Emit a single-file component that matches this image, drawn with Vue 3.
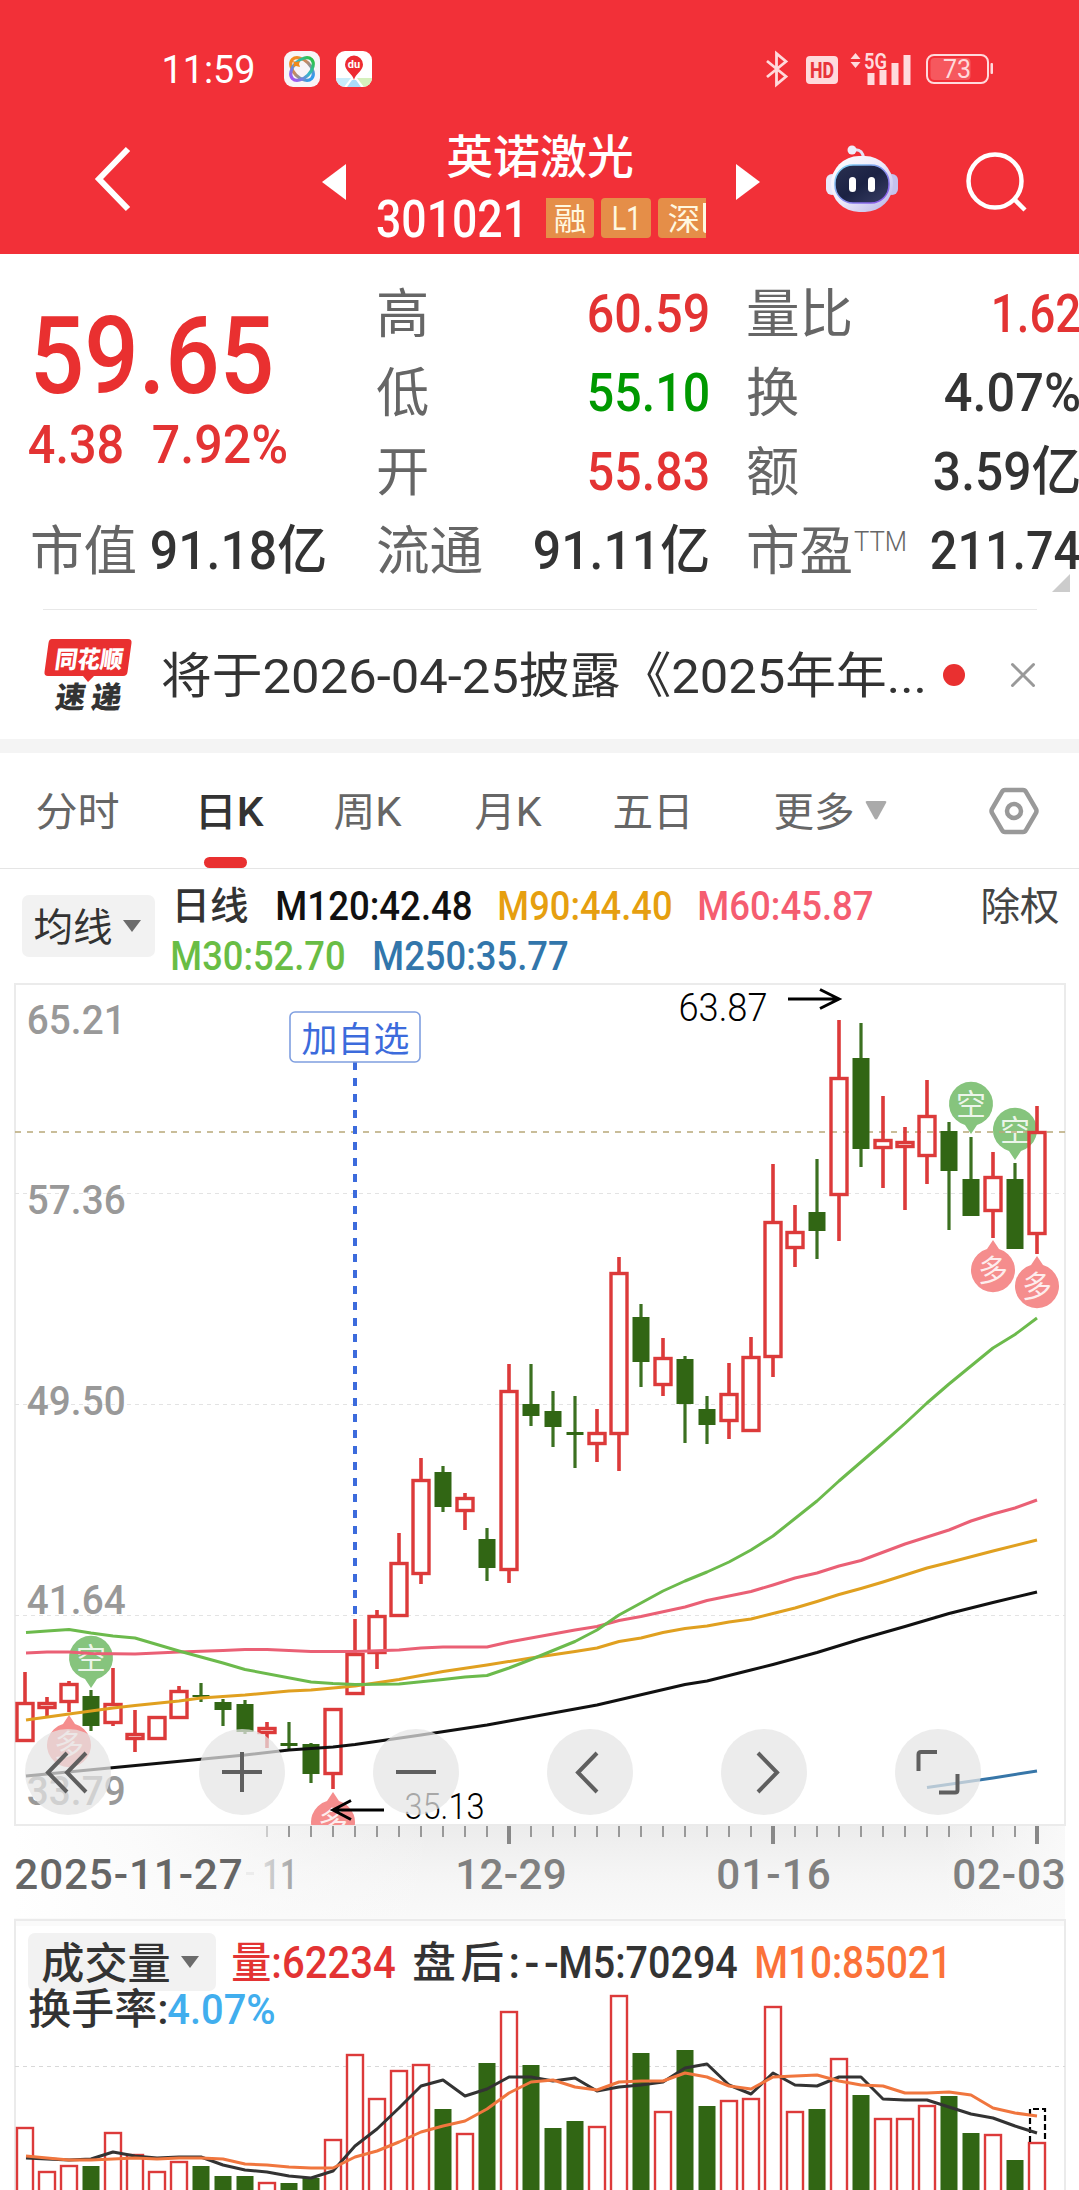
<template>
  <div class="page">
    <header class="top">
      <div class="status">
        <Fit class="time" t="11:59" :w="91" :cap="27" />
        <svg class="app" width="36" height="36" viewBox="0 0 36 36">
          <defs>
            <linearGradient id="ring" x1="0" y1="0" x2="1" y2="0">
              <stop offset="0" stop-color="#f58a1e" />
              <stop offset=".4" stop-color="#c98a60" />
              <stop offset="1" stop-color="#2f9bf0" />
            </linearGradient>
            <linearGradient id="ring2" x1="1" y1="0" x2="0" y2="0">
              <stop offset="0" stop-color="#2fc04a" />
              <stop offset=".45" stop-color="#35b8c8" />
              <stop offset="1" stop-color="#a05af0" />
            </linearGradient>
          </defs>
          <rect width="36" height="36" rx="9" fill="#f8f4f7" />
          <ellipse cx="18" cy="18" rx="13.500" ry="8.500" transform="rotate(45 18 18)" fill="none" stroke="url(#ring)" stroke-width="3.200" />
          <ellipse cx="18" cy="18" rx="13.500" ry="8.500" transform="rotate(-45 18 18)" fill="none" stroke="url(#ring2)" stroke-width="3.200" />
          <path d="M9 10l3 1 4-1-1 3 1 3-4-1-3 1 1-3z" fill="#f08a1c" />
        </svg>
        <svg class="app app2" width="36" height="36" viewBox="0 0 36 36">
          <clipPath id="mapclip"><rect width="36" height="36" rx="9" /></clipPath>
          <g clip-path="url(#mapclip)">
            <rect width="36" height="36" fill="#fff" />
            <path d="M0 27h15L8 36H0z" fill="#c8ecfb" />
            <path d="M21 27h15v9h-8z" fill="#d5f0bd" />
            <path d="M16 29h4l5 7H11z" fill="#aadcf8" />
          </g>
          <path d="M18 29c-1-6-9-9-9-15.500a9 9 0 0 1 18 0C27 20 19 23 18 29z" fill="#ee2b31" />
          <text x="18" y="17" class="du">du</text>
        </svg>
        <svg class="bt" width="22" height="34" viewBox="0 0 22 34">
          <path d="M1 9l19 15.500-9.500 8v-31l9.500 8L1 25" />
        </svg>
        <svg class="hd" width="32" height="28" viewBox="0 0 32 28">
          <rect width="32" height="28" rx="4" fill="#ffdadc" />
          <text x="4" y="22" textLength="24" lengthAdjust="spacingAndGlyphs">HD</text>
        </svg>
        <svg class="signal" width="61" height="34" viewBox="0 0 61 34">
          <path d="M5.500 1l5 6H.5zM5.500 16l5-6H.5z" />
          <text x="14" y="17" textLength="23" lengthAdjust="spacingAndGlyphs">5G</text>
          <path d="M17.500 21h7v12h-7zM29.500 18h7v15h-7zM41.500 11h7v22h-7zM53.500 3h7v30h-7z" />
        </svg>
        <svg class="battery" width="68" height="30" viewBox="0 0 68 30">
          <rect x="1" y="1" width="61" height="28" rx="7" fill="none" stroke="#ffdadc" stroke-width="2" />
          <rect x="4.500" y="4" width="40" height="22" rx="4" fill="#f6585e" />
          <rect x="64.500" y="9" width="2.500" height="11" rx="1" fill="#ffdadc" />
          <text x="31" y="23.500" text-anchor="middle">73</text>
        </svg>
      </div>
      <div class="nav">
        <svg class="back" width="40" height="70" viewBox="0 0 40 70"><path d="M35 4L6 34l29 30" /></svg>
        <svg class="prev" width="24" height="36"><path d="M0 18L24 0v36z" /></svg>
        <div class="title">
          <Fit t="英诺激光" :w="184" :em="46" class="name" />
          <div class="code-row">
            <Fit t="301021" :w="148" :cap="37" class="code" />
            <div class="tags">
              <span class="tag first"><Fit t="融" :w="30" :em="31" /></span>
              <span class="tag"><Fit t="L1" :w="27" :cap="24" /></span>
              <span class="tag last"><Fit t="深" :w="30" :em="31" /><i class="cut"></i></span>
            </div>
          </div>
        </div>
        <svg class="next" width="24" height="36"><path d="M24 18L0 0v36z" /></svg>
        <svg class="robot" width="72" height="68" viewBox="0 0 72 68">
          <defs>
            <linearGradient id="head" x1="0" y1="0" x2="1" y2="1">
              <stop offset="0" stop-color="#fff" />
              <stop offset=".5" stop-color="#eceafa" />
              <stop offset="1" stop-color="#b4b0e6" />
            </linearGradient>
            <linearGradient id="face" x1="0" y1="0" x2="1" y2="1">
              <stop offset="0" stop-color="#2a3050" />
              <stop offset=".5" stop-color="#1b2244" />
              <stop offset="1" stop-color="#3a3f66" />
            </linearGradient>
            <linearGradient id="rim" x1="0" y1="0" x2="1" y2="1">
              <stop offset="0" stop-color="#7fdcf4" />
              <stop offset="1" stop-color="#8a4be8" />
            </linearGradient>
          </defs>
          <path d="M28 5c7-1 9 3 10 9" fill="none" stroke="#e4e2f6" stroke-width="3" />
          <circle cx="26" cy="5" r="4.500" fill="#efeefb" />
          <rect x="0" y="29" width="12" height="21" rx="6" fill="#e9e8fa" />
          <rect x="60" y="29" width="12" height="21" rx="6" fill="#c4c2ec" />
          <rect x="5" y="11" width="62" height="56" rx="28" fill="url(#head)" />
          <rect x="9" y="20" width="54" height="38" rx="18" fill="url(#face)" stroke="url(#rim)" stroke-width="1.500" />
          <rect x="23" y="32" width="7" height="15" rx="3.500" fill="#fff" />
          <rect x="42" y="32" width="7" height="15" rx="3.500" fill="#fff" />
        </svg>
        <svg class="search" width="62" height="62" viewBox="0 0 62 62">
          <circle cx="29" cy="31" r="26.500" />
          <path d="M47 48l12 12" />
        </svg>
      </div>
    </header>

    <section class="quote">
      <div class="col-a">
        <div class="price">
          <Fit t="59.65" :w="236" :cap="77" />
          <div class="change">
            <Fit t="4.38" :w="92" :cap="38.5" />
            <Fit t="7.92%" :w="132" :cap="38.5" />
          </div>
        </div>
        <div class="cell">
          <Fit t="市值" :w="103" :em="53" class="label" />
          <Fit t="91.18亿" :w="173" :cap="38" class="dark" />
        </div>
      </div>
      <div v-for="(col, n) in quotes" :key="n" :class="['col', 'col-' + n]">
        <div v-for="q in col" :key="q.k" class="cell">
          <span class="label">
            <Fit :t="q.k" :w="q.k.length > 1 ? 103 : 49" :em="53" />
            <Fit v-if="q.sup" :t="q.sup" :w="51" :cap="19" class="sup" />
          </span>
          <Fit :t="q.v" :w="q.w" :cap="38" :class="q.c" />
        </div>
      </div>
      <svg class="corner" width="18" height="18"><path d="M18 0v18H0z" /></svg>
    </section>

    <section class="notice">
      <svg width="88" height="72" viewBox="0 0 88 72">
        <path d="M8 0h76q4 0 3.500 4l-4 29q-.5 4-4.500 4H50l-6 6-5-6H4q-4 0-3.500-4l4-29Q5 0 8 0z" fill="#e93030" />
        <g transform="skewX(-8)">
          <text x="14" y="29" class="brand" textLength="68" lengthAdjust="spacingAndGlyphs">同花顺</text>
          <text x="20" y="69" class="express" textLength="66">速递</text>
        </g>
      </svg>
      <Fit t="将于2026-04-25披露《2025年年..." :w="762" :em="49" class="headline" />
      <i class="dot"></i>
      <svg class="close" width="24" height="24"><path d="M1.500 1.500l21 21M22.500 1.500l-21 21" /></svg>
    </section>

    <nav class="tabs">
      <Fit v-for="t in tabs" :key="t.t" :t="t.t" :w="t.w" :em="40" :class="['tab', { active: t.on }]" :style="{ marginLeft: t.gap + 'px' }" />
      <svg class="more" width="22" height="19"><path d="M2 0h18q2 0 1 2L12.500 17.500q-1.500 2-3 0L1 2Q0 0 2 0z" /></svg>
      <svg class="gear" width="50" height="48" viewBox="0 0 50 48">
        <path d="M16 3h18q2 0 3 2l10 17q1 2 0 4L37 43q-1 2-3 2H16q-2 0-3-2L3 26q-1-2 0-4L13 5q1-2 3-2z" />
        <circle cx="25" cy="24" r="7" />
      </svg>
      <i class="underline"></i>
    </nav>

    <section class="ma">
      <div class="pill">
        <Fit t="均线" :w="76" :em="39" />
        <svg width="18" height="12"><path d="M0 0h18L9 12z" /></svg>
      </div>
      <div class="ma-lines">
        <div class="ma-row">
          <Fit t="日线" :w="74" :em="38" class="ma-name" />
          <Fit t="M120:42.48" :w="194" :cap="29" class="m120" />
          <Fit t="M90:44.40" :w="172" :cap="29" class="m90" />
          <Fit t="M60:45.87" :w="173" :cap="29" class="m60" />
        </div>
        <div class="ma-row two">
          <Fit t="M30:52.70" :w="172" :cap="29" class="m30" />
          <Fit t="M250:35.77" :w="193" :cap="29" class="m250" />
        </div>
      </div>
      <Fit t="除权" :w="76" :em="39" class="adjust" />
    </section>

    <section class="kline">
      <svg width="1079" height="943" viewBox="0 983 1079 943">
        <defs>
          <linearGradient id="axisv" x1="0" y1="0" x2="0" y2="1">
            <stop offset="0" stop-color="#ececec" />
            <stop offset=".5" stop-color="#f5f5f5" />
            <stop offset="1" stop-color="#fafafa" />
          </linearGradient>
          <linearGradient id="axish" x1="0" y1="0" x2="1" y2="0">
            <stop offset="0" stop-color="#fff" />
            <stop offset=".12" stop-color="#fcfcfc" stop-opacity=".9" />
            <stop offset=".4" stop-color="#fafafa" stop-opacity="0" />
            <stop offset=".88" stop-color="#fafafa" stop-opacity="0" />
            <stop offset="1" stop-color="#fafafa" stop-opacity=".9" />
          </linearGradient>
          <linearGradient id="datefade" x1="0" y1="0" x2="1" y2="0">
            <stop offset="0" stop-color="#dcdcdc" />
            <stop offset="1" stop-color="#9c9c9c" />
          </linearGradient>
          <clipPath id="plot"><rect x="14" y="983" width="1052" height="842" /></clipPath>
        </defs>
        <rect x="14" y="1825" width="1051" height="101" fill="url(#axisv)" />
        <rect x="14" y="1825" width="1051" height="101" fill="url(#axish)" />
        <rect x="15" y="984" width="1050" height="841" class="frame" />
        <path d="M15 1193.500H1065M15 1404.500H1065M15 1615.500H1065" class="grid" />

        <Fit v-for="p in priceTicks" :key="p.t" :t="p.t" :w="95.5" :cap="29" x="28.5" :y="p.y" class="tick" />

        <g clip-path="url(#plot)">
          <g v-for="(m, i) in marks" :key="i" :transform="`translate(${m.x} ${m.y})`">
            <path v-if="m.up" d="M0 30l-6-9a22 22 0 1 1 12 0z" fill="#86c47d" />
            <path v-else d="M0-30l-6 9a22 22 0 1 0 12 0z" fill="#f58d8d" />
            <text y="11" text-anchor="middle" class="mark">{{ m.up ? '空' : '多' }}</text>
          </g>
        </g>
        <path d="M15 1132H1065" class="last-price" />

        <path d="M355 1062V1615" class="watch-line" />
        <rect x="290" y="1012" width="130" height="50" rx="5" class="watch-box" />
        <Fit t="加自选" :w="105" :em="35" x="303" y="1021" class="watch-text" />

        <g v-for="(c, i) in candles" :key="i" :class="c[0] ? 'up' : 'down'">
          <template v-if="c[0]">
            <path :d="`M${cx(i)} ${c[1]}V${c[2]}M${cx(i)} ${c[3]}V${c[4]}`" />
            <rect :x="cx(i) - 8" :y="c[2] + 1.5" width="16" :height="Math.max(c[3] - c[2] - 3, 2)" />
          </template>
          <template v-else>
            <path :d="`M${cx(i)} ${c[1]}V${c[4]}`" />
            <rect :x="cx(i) - 8.5" :y="c[2]" width="17" :height="c[3] - c[2]" />
          </template>
        </g>

        <polyline v-for="l in maLines" :key="l.c" :points="pts(l.p)" :stroke="l.c" class="line" />

        <Fit t="63.87" :w="86" :cap="27" x="680" y="994" class="extreme" />
        <path d="M788 999H838M820 989.500l19 9.500-19 9.500" class="arrow" />
        <Fit t="35.13" :w="77" :cap="26" x="406" y="1793" class="extreme" />
        <path d="M384 1810H334M351 1800.500l-18 9.500 18 9.500" class="arrow" />

        <path v-for="i in 36" :key="i" :d="`M${cx(i + 10)} 1826v11`" :class="['minor', { faint: i < 2 }]" />
        <path d="M509 1826v18M773 1826v18M1037 1826v18" class="major" />
        <Fit t="11" :w="32" :cap="30" x="264" y="1859" class="faded" />
        <path d="M246 1873.500h8" class="faint-dash" />
        <Fit v-for="d in dates" :key="d.t" :t="d.t" :w="d.w" :cap="30" :x="d.x" y="1859" adjust="spacing" :class="d.c" />
      </svg>
      <div class="tools">
        <button v-for="(t, i) in tools" :key="i" class="tool">
          <svg width="86" height="86" viewBox="0 0 86 86"><path :d="t" /></svg>
        </button>
      </div>
    </section>

    <section class="volume">
      <svg class="vol-svg" width="1079" height="272" viewBox="0 1918 1079 272">
        <rect x="14" y="1918" width="1051" height="8" fill="#fafafa" />
        <path d="M15 2190V1920H1065V2190" class="frame" />
        <path d="M15 2066.500H1065" class="grid strong" />
        <g v-for="(v, i) in volumes" :key="i" :class="candles[i][0] ? 'up vol' : 'down'">
          <rect v-if="candles[i][0]" :x="cx(i) - 8" :y="v + 1" width="16" height="220" />
          <rect v-else :x="cx(i) - 8.5" :y="v" width="17" height="220" />
        </g>
        <path d="M1030 2142V2109H1045V2142" class="forecast" />
        <polyline :points="pts(vol5)" stroke="#333" class="line" />
        <polyline :points="pts(vol10)" stroke="#f0763e" class="line" />
      </svg>
      <div class="vol-legend">
        <div class="vol-row">
          <div class="pill big">
            <Fit t="成交量" :w="126" :em="43" />
            <svg width="18" height="12"><path d="M0 0h18L9 12z" /></svg>
          </div>
          <Fit t="量:62234" :w="161" :cap="31" class="red g1" />
          <Fit t="盘后:--" :w="143" :cap="31" adjust="spacing" class="dark g2" />
          <Fit t="M5:70294" :w="176" :cap="31" class="dark g3" />
          <Fit t="M10:85021" :w="194" :cap="31" class="orange g4" />
        </div>
        <div class="vol-row second">
          <Fit t="换手率:" :w="137" :cap="30" class="dark" />
          <Fit t="4.07%" :w="105" :cap="30" class="sky" />
        </div>
      </div>
    </section>
  </div>
</template>

<script setup>
import { h } from 'vue'

// Text stretched to an exact ink width. `cap` sizes by digit height, `em` by han character size.
const Fit = (props) => {
  const size = props.em || props.cap / 0.711
  const pad = size * 0.04
  return h('svg', { width: props.w, height: props.em || props.cap, class: 'fit', overflow: 'visible' }, [
    h('text', {
      x: -pad,
      y: props.em ? size * 0.88 : props.cap,
      'font-size': size,
      textLength: props.w + pad * 2,
      lengthAdjust: props.adjust || 'spacingAndGlyphs',
    }, props.t),
  ])
}
Fit.props = { t: String, w: Number, cap: Number, em: Number, adjust: String }

const quotes = [
  [
    { k: '高', v: '60.59', w: 119, c: 'red' },
    { k: '低', v: '55.10', w: 119, c: 'green' },
    { k: '开', v: '55.83', w: 119, c: 'red' },
    { k: '流通', v: '91.11亿', w: 173, c: 'dark' },
  ],
  [
    { k: '量比', v: '1.62', w: 86, c: 'red' },
    { k: '换', v: '4.07%', w: 133, c: 'dark' },
    { k: '额', v: '3.59亿', w: 144, c: 'dark' },
    { k: '市盈', v: '211.74', w: 147, c: 'dark', sup: 'TTM' },
  ],
]

const tabs = [
  { t: '分时', w: 81, gap: 37 },
  { t: '日K', w: 66, gap: 78 },
  { t: '周K', w: 65, gap: 73 },
  { t: '月K', w: 64, gap: 76 },
  { t: '五日', w: 78, gap: 74 },
  { t: '更多', w: 78, gap: 83 },
]
tabs[1].on = true

const priceTicks = [
  { t: '65.21', y: 1005 },
  { t: '57.36', y: 1185 },
  { t: '49.50', y: 1386 },
  { t: '41.64', y: 1585 },
  { t: '33.79', y: 1776 },
]

const dates = [
  { t: '2025-11-27', x: 16, w: 225, c: 'date first-date' },
  { t: '12-29', x: 457, w: 108, c: 'date' },
  { t: '01-16', x: 718, w: 111, c: 'date' },
  { t: '02-03', x: 954, w: 110, c: 'date' },
]

const marks = [
  { x: 91, y: 1658, up: true },
  { x: 971, y: 1104, up: true },
  { x: 1015, y: 1130, up: true },
  { x: 69, y: 1745 },
  { x: 333, y: 1822 },
  { x: 993, y: 1270 },
  { x: 1037, y: 1286 },
]

// [rising, high, body top, body bottom, low]
const candles = [
  [1, 1672, 1702, 1742, 1742], [1, 1697, 1702, 1709, 1717], [1, 1681, 1683, 1703, 1712],
  [0, 1690, 1696, 1726, 1731], [1, 1668, 1703, 1724, 1726], [1, 1710, 1733, 1740, 1752],
  [1, 1716, 1716, 1740, 1740], [1, 1686, 1690, 1719, 1719], [0, 1683, 1695, 1697, 1702],
  [0, 1699, 1702, 1710, 1726], [0, 1700, 1704, 1732, 1734], [1, 1722, 1727, 1734, 1748],
  [0, 1722, 1743, 1746, 1749], [0, 1743, 1744, 1774, 1783], [1, 1708, 1708, 1775, 1789],
  [1, 1619, 1653, 1695, 1695], [1, 1610, 1615, 1654, 1669], [1, 1533, 1562, 1617, 1617],
  [1, 1458, 1479, 1575, 1584], [0, 1466, 1472, 1507, 1512], [1, 1493, 1497, 1512, 1530],
  [0, 1528, 1539, 1568, 1581], [1, 1364, 1390, 1571, 1583], [0, 1364, 1404, 1416, 1426],
  [0, 1391, 1411, 1427, 1447], [0, 1396, 1432, 1435, 1468], [1, 1409, 1432, 1445, 1462],
  [1, 1257, 1272, 1435, 1471], [0, 1304, 1317, 1362, 1387], [1, 1338, 1357, 1386, 1396],
  [0, 1356, 1359, 1404, 1443], [0, 1396, 1409, 1425, 1444], [1, 1363, 1393, 1422, 1439],
  [1, 1337, 1356, 1432, 1432], [1, 1164, 1221, 1358, 1377], [1, 1205, 1231, 1249, 1267],
  [0, 1159, 1212, 1231, 1259], [1, 1020, 1077, 1196, 1241], [0, 1023, 1058, 1149, 1167],
  [1, 1096, 1139, 1149, 1188], [1, 1127, 1141, 1148, 1210], [1, 1080, 1115, 1157, 1184],
  [0, 1122, 1131, 1171, 1230], [0, 1137, 1179, 1216, 1216], [1, 1152, 1176, 1212, 1238],
  [0, 1163, 1179, 1249, 1249], [1, 1106, 1131, 1235, 1254],
]

// moving averages as [day index, y]
const maLines = [
  { c: '#111', p: [[0, 1776], [10, 1755], [12, 1750], [14, 1747], [15, 1744.5], [18, 1735], [21, 1725], [22, 1721], [26, 1705], [30, 1684.5], [31, 1681], [33, 1670], [34, 1664.5], [36, 1652.5], [38, 1639], [40, 1626.5], [42, 1613.5], [44, 1602.5], [46, 1592]] },
  { c: '#e0a020', p: [[0, 1720], [2, 1714], [3, 1711], [4, 1708], [5, 1705.5], [7, 1701], [8, 1698], [10, 1695], [12, 1691], [13, 1690], [15, 1686], [17, 1679.5], [19, 1671.5], [21, 1665], [23, 1658], [25, 1651.5], [26, 1648], [27, 1641.5], [28, 1638], [29, 1632.5], [30, 1628.5], [31, 1626], [32, 1622], [33, 1619], [34, 1613.5], [35, 1608], [36, 1601.5], [37, 1594.5], [38, 1588.5], [39, 1582], [40, 1575], [41, 1568], [42, 1562.5], [44, 1551], [46, 1540]] },
  { c: '#ea6075', p: [[0, 1653], [1, 1652], [2, 1652], [3, 1653.5], [5, 1654], [7, 1652], [9, 1650.5], [10, 1649.5], [11, 1649.5], [13, 1651.5], [15, 1651.5], [17, 1650], [18, 1648], [19, 1647], [21, 1647], [22, 1642], [25, 1630], [26, 1626.5], [27, 1620.5], [28, 1616.5], [30, 1607], [31, 1600.5], [32, 1596], [33, 1591.5], [34, 1585], [35, 1578], [36, 1573], [37, 1566], [38, 1560.5], [40, 1544], [42, 1530], [43, 1521], [44, 1514], [45, 1508], [46, 1500]] },
  { c: '#6cba4c', p: [[0, 1632.5], [1, 1631], [2, 1629.5], [3, 1633], [4, 1636], [5, 1638], [7, 1651], [9, 1663], [10, 1669.5], [13, 1682], [14, 1683.5], [15, 1684.5], [17, 1684], [19, 1679.5], [20, 1677], [21, 1675.5], [22, 1668], [23, 1659.5], [25, 1641.5], [26, 1630], [27, 1615], [28, 1603], [29, 1591], [30, 1581], [31, 1572], [32, 1562], [33, 1550], [34, 1536], [35, 1518.5], [36, 1501], [37, 1481], [38, 1462], [39, 1443], [40, 1423.5], [41, 1403], [42, 1384], [43, 1366], [44, 1348], [45, 1334.5], [46, 1318]] },
  { c: '#3776a8', p: [[41, 1787.5], [44, 1778], [46, 1771]] },
]

const volumes = [
  2127, 2171, 2165, 2166, 2132, 2154, 2171, 2161, 2166, 2176, 2176, 2182, 2183, 2178, 2139, 2054,
  2098, 2070, 2064, 2109, 2133, 2063, 2011, 2065, 2128, 2121, 2126, 1995, 2053, 2111, 2050, 2106,
  2100, 2098, 2006, 2111, 2109, 2058, 2095, 2118, 2118, 2105, 2096, 2133, 2134, 2160, 2142,
]

const indexed = (ys) => ys.map((y, i) => [i, y])
const vol5 = indexed([
  2158, 2159, 2160, 2159, 2152, 2156, 2158, 2157, 2157, 2165, 2170, 2172, 2176, 2178, 2171, 2146,
  2129, 2108, 2086, 2080, 2096, 2089, 2077, 2077, 2081, 2078, 2091, 2087, 2085, 2082, 2068, 2064,
  2085, 2094, 2073, 2085, 2086, 2077, 2077, 2099, 2100, 2100, 2107, 2114, 2118, 2126, 2133,
])
const vol10 = indexed([
  2156, 2158, 2160, 2160, 2159, 2158, 2159, 2158, 2158, 2159, 2164, 2165, 2167, 2168, 2168, 2157,
  2151, 2142, 2132, 2126, 2121, 2109, 2093, 2082, 2080, 2087, 2090, 2082, 2081, 2081, 2073, 2077,
  2086, 2089, 2077, 2076, 2075, 2081, 2085, 2086, 2093, 2093, 2092, 2095, 2108, 2113, 2116,
])

const cx = (i) => 25 + i * 22
const pts = (list) => list.map(([i, y]) => `${i ? cx(i) : 26},${y}`).join(' ')

const tools = [
  'M42 24L23 43.500l19 19.500M61 24L42 43.500l19 19.500',
  'M23 43h40M43 23v40',
  'M23 43h40',
  'M50 24L31 43.500l19 19.500',
  'M37 24l19 19.500-19 19.500',
  'M23.500 42V25.500q0-2.500 2.500-2.500h16M62.500 45v16q0 2.500-2.500 2.500H44',
]
</script>

<style>
body { margin: 0; background: #fff; }
</style>

<style scoped>
.page {
  width: 1079px; height: 2190px;
  overflow: hidden;
  background: #fff;
  font-family: Roboto, "Noto Sans CJK SC", sans-serif;
  color: #333;
}
svg { display: block; flex-shrink: 0; overflow: visible; }
.fit { fill: currentColor; overflow: visible; }

/* header */
.top { height: 254px; background: #f23038; color: #fff; }
.status {
  height: 128px; padding: 10px 0 0 163px;
  box-sizing: border-box;
  display: flex; align-items: center;
}
.app { margin-left: 30px; }
.app2 { margin-left: 16px; }
.du { font-size: 11px; font-weight: 700; fill: #fff; text-anchor: middle; }
.bt { margin-left: 394px; fill: none; stroke: #ffdadc; stroke-width: 2.8; }
.hd { margin-left: 18px; margin-top: 2px; }
.hd text { font-size: 22px; font-weight: 800; fill: #e8343b; }
.signal { margin-left: 12px; fill: #ffdadc; }
.signal text { font-size: 22px; font-weight: 600; }
.battery { margin-left: 15px; }
.battery text { font-size: 25px; fill: #ffdadc; }
.nav { height: 126px; display: flex; align-items: flex-start; }
.back { margin: 17px 0 0 93px; fill: none; stroke: #fff; stroke-width: 6; }
.prev { margin: 36px 0 0 189px; fill: #fff; }
.title { width: 328px; margin: 5px 0 0 32px; }
.name { margin: 0 auto 0 70px; font-weight: 500; }
.code-row { display: flex; align-items: center; margin-top: 19px; }
.code { font-weight: 500; }
.tags { display: flex; gap: 7px; width: 160px; margin-left: 20px; overflow: hidden; }
.tag {
  width: 50px; height: 40px; flex-shrink: 0;
  display: flex; align-items: center; justify-content: center;
  background: #e58e48; border-radius: 4px;
  color: #fff8e0;
}
.tag.first { width: 48px; border-radius: 0 4px 4px 0; }
.tag.last { width: 60px; justify-content: flex-start; padding-left: 11px; box-sizing: border-box; }
.cut { width: 3px; height: 30px; margin-left: 4px; border-left: 3px solid #fff8e0; border-radius: 0 0 0 8px; box-sizing: border-box; }
.next { margin: 36px 0 0 30px; fill: #fff; }
.robot { margin: 17px 0 0 66px; }
.search { margin: 22px 0 0 68px; fill: none; stroke: #fff; stroke-width: 4.5; }

/* quote */
.quote {
  position: relative;
  height: 356px; padding: 19px 0 0 32px;
  box-sizing: border-box;
  display: flex;
}
.quote::after {
  content: ""; position: absolute; left: 43px; right: 42px; bottom: 0;
  height: 1px; background: #e8e8e8;
}
.col-a { width: 293px; }
.price { height: 237px; padding: 43px 0 0 2px; box-sizing: border-box; color: #e93030; font-weight: 500; }
.change { display: flex; gap: 32px; margin: 31px 0 0 -4px; color: #e33333; }
.cell { height: 79px; display: flex; align-items: center; justify-content: space-between; font-weight: 500; }
.col { width: 330px; margin-left: 53px; }
.col-1 { width: 331px; margin-left: 40px; }
.label { display: flex; color: #666; font-weight: 400; }
.sup { margin: 9px 0 0 4px; font-weight: 300; }
.red { color: #e33333; }
.green { color: #090; }
.dark { color: #333; }
.corner { position: absolute; left: 1052px; top: 320px; fill: #ccc; }

/* notice */
.notice {
  height: 129px; padding-left: 44px;
  display: flex; align-items: center;
  border-bottom: 14px solid #f4f4f4;
}
.brand { font-size: 24px; font-weight: 900; fill: #fff; }
.express { font-size: 30px; font-weight: 900; fill: #333; }
.headline { margin-left: 31px; }
.dot { width: 22px; height: 22px; margin-left: 18px; border-radius: 50%; background: #e93030; }
.close { margin-left: 46px; fill: none; stroke: #999; stroke-width: 3; stroke-linecap: round; }

/* period tabs */
.tabs {
  position: relative;
  height: 115px;
  display: flex; align-items: center;
  border-bottom: 1px solid #e5e5e5;
}
.tab { color: #666; }
.tab.active { color: #333; font-weight: 500; }
.more { margin-left: 12px; fill: #aaa; }
.gear { margin-left: 102px; fill: none; stroke: #999; stroke-width: 4.5; }
.underline {
  position: absolute; left: 204px; bottom: 0;
  width: 43px; height: 11px; border-radius: 5.5px; background: #e93030;
}

/* moving average legend */
.ma { height: 114px; display: flex; align-items: flex-start; padding-left: 22px; }
.pill {
  width: 133px; height: 62px; margin-top: 26px; padding-left: 13px;
  box-sizing: border-box;
  display: flex; align-items: center; gap: 12px;
  background: #f2f2f2; border-radius: 7px;
}
.pill > svg:last-child { fill: #6c6c6c; }
.ma-lines { width: 717px; margin: 17px 0 0 17px; }
.ma-row { display: flex; align-items: center; height: 38px; font-weight: 500; }
.ma-row.two { margin-top: 12px; }
.ma-name { margin-left: 1px; }
.m120 { margin-left: 30px; color: #111; }
.m90 { margin-left: 28px; color: #e69f10; }
.m60 { margin-left: 28px; color: #f55d70; }
.m30 { color: #69bd45; }
.m250 { margin-left: 30px; color: #3276ab; }
.adjust { margin: 17px 0 0 93px; color: #444; }

/* candle chart */
.kline { position: relative; height: 935px; }
.frame { fill: none; stroke: #ebebeb; stroke-width: 2; }
.grid { fill: none; stroke: #e3e3e3; stroke-width: 1; stroke-dasharray: 4 4; }
.grid.strong { stroke: #d8d8d8; }
.tick { color: #999; font-weight: 500; }
.mark { font-size: 30px; fill: #fff; fill-opacity: .85; }
.last-price { stroke: #b8a878; stroke-width: 1.6; stroke-dasharray: 6 6; }
.watch-line { stroke: #3c6bdc; stroke-width: 4; stroke-dasharray: 8 8; }
.watch-box { fill: #fff; stroke: #7f9fe0; stroke-width: 1.6; }
.watch-text { color: #3c6bdc; }
.up path { stroke: #dc3a3a; stroke-width: 3.6; }
.up rect { fill: none; stroke: #dc3a3a; stroke-width: 3.4; }
.up.vol rect { stroke-width: 2.4; fill: #fff; }
.down path { stroke: #3b7020; stroke-width: 3.2; }
.down rect { fill: #316614; }
.line { fill: none; stroke-width: 3; stroke-linejoin: round; }
.extreme { color: #000; font-weight: 300; }
.arrow { fill: none; stroke: #000; stroke-width: 3; }
.minor { stroke: #999; stroke-width: 2; }
.minor.faint { stroke: #ccc; }
.major { stroke: #888; stroke-width: 4; }
.date { color: #808080; font-weight: 500; }
.first-date { color: #666; }
.faded { fill: url(#datefade); font-weight: 500; }
.faint-dash { stroke: #ececec; stroke-width: 3; }
.tools {
  position: absolute; left: 25px; top: 746px;
  display: flex; gap: 88px;
}
.tool {
  width: 86px; height: 86px; padding: 0;
  border: none; border-radius: 50%;
  background: rgba(229, 229, 229, .73);
}
.tool path { fill: none; stroke: #5f5f5f; stroke-width: 4; }

/* volume */
.volume { position: relative; height: 272px; }
.vol-svg { position: absolute; left: 0; top: 0; }
.forecast { fill: none; stroke: #000; stroke-width: 2.2; stroke-dasharray: 6 3; }
.vol-legend { position: relative; padding: 15px 0 0 28px; font-weight: 500; }
.vol-row { display: flex; align-items: center; height: 58px; }
.vol-row.second { height: 36px; padding-left: 2px; gap: 2px; }
.pill.big { width: 188px; height: 58px; margin: 0; padding-left: 15px; font-weight: 500; }
.g1 { margin-left: 17px; }
.g2 { margin-left: 20px; }
.g3 { margin-left: 3px; }
.g4 { margin-left: 20px; }
.orange { color: #fb7239; }
.sky { color: #41aeee; }
</style>
